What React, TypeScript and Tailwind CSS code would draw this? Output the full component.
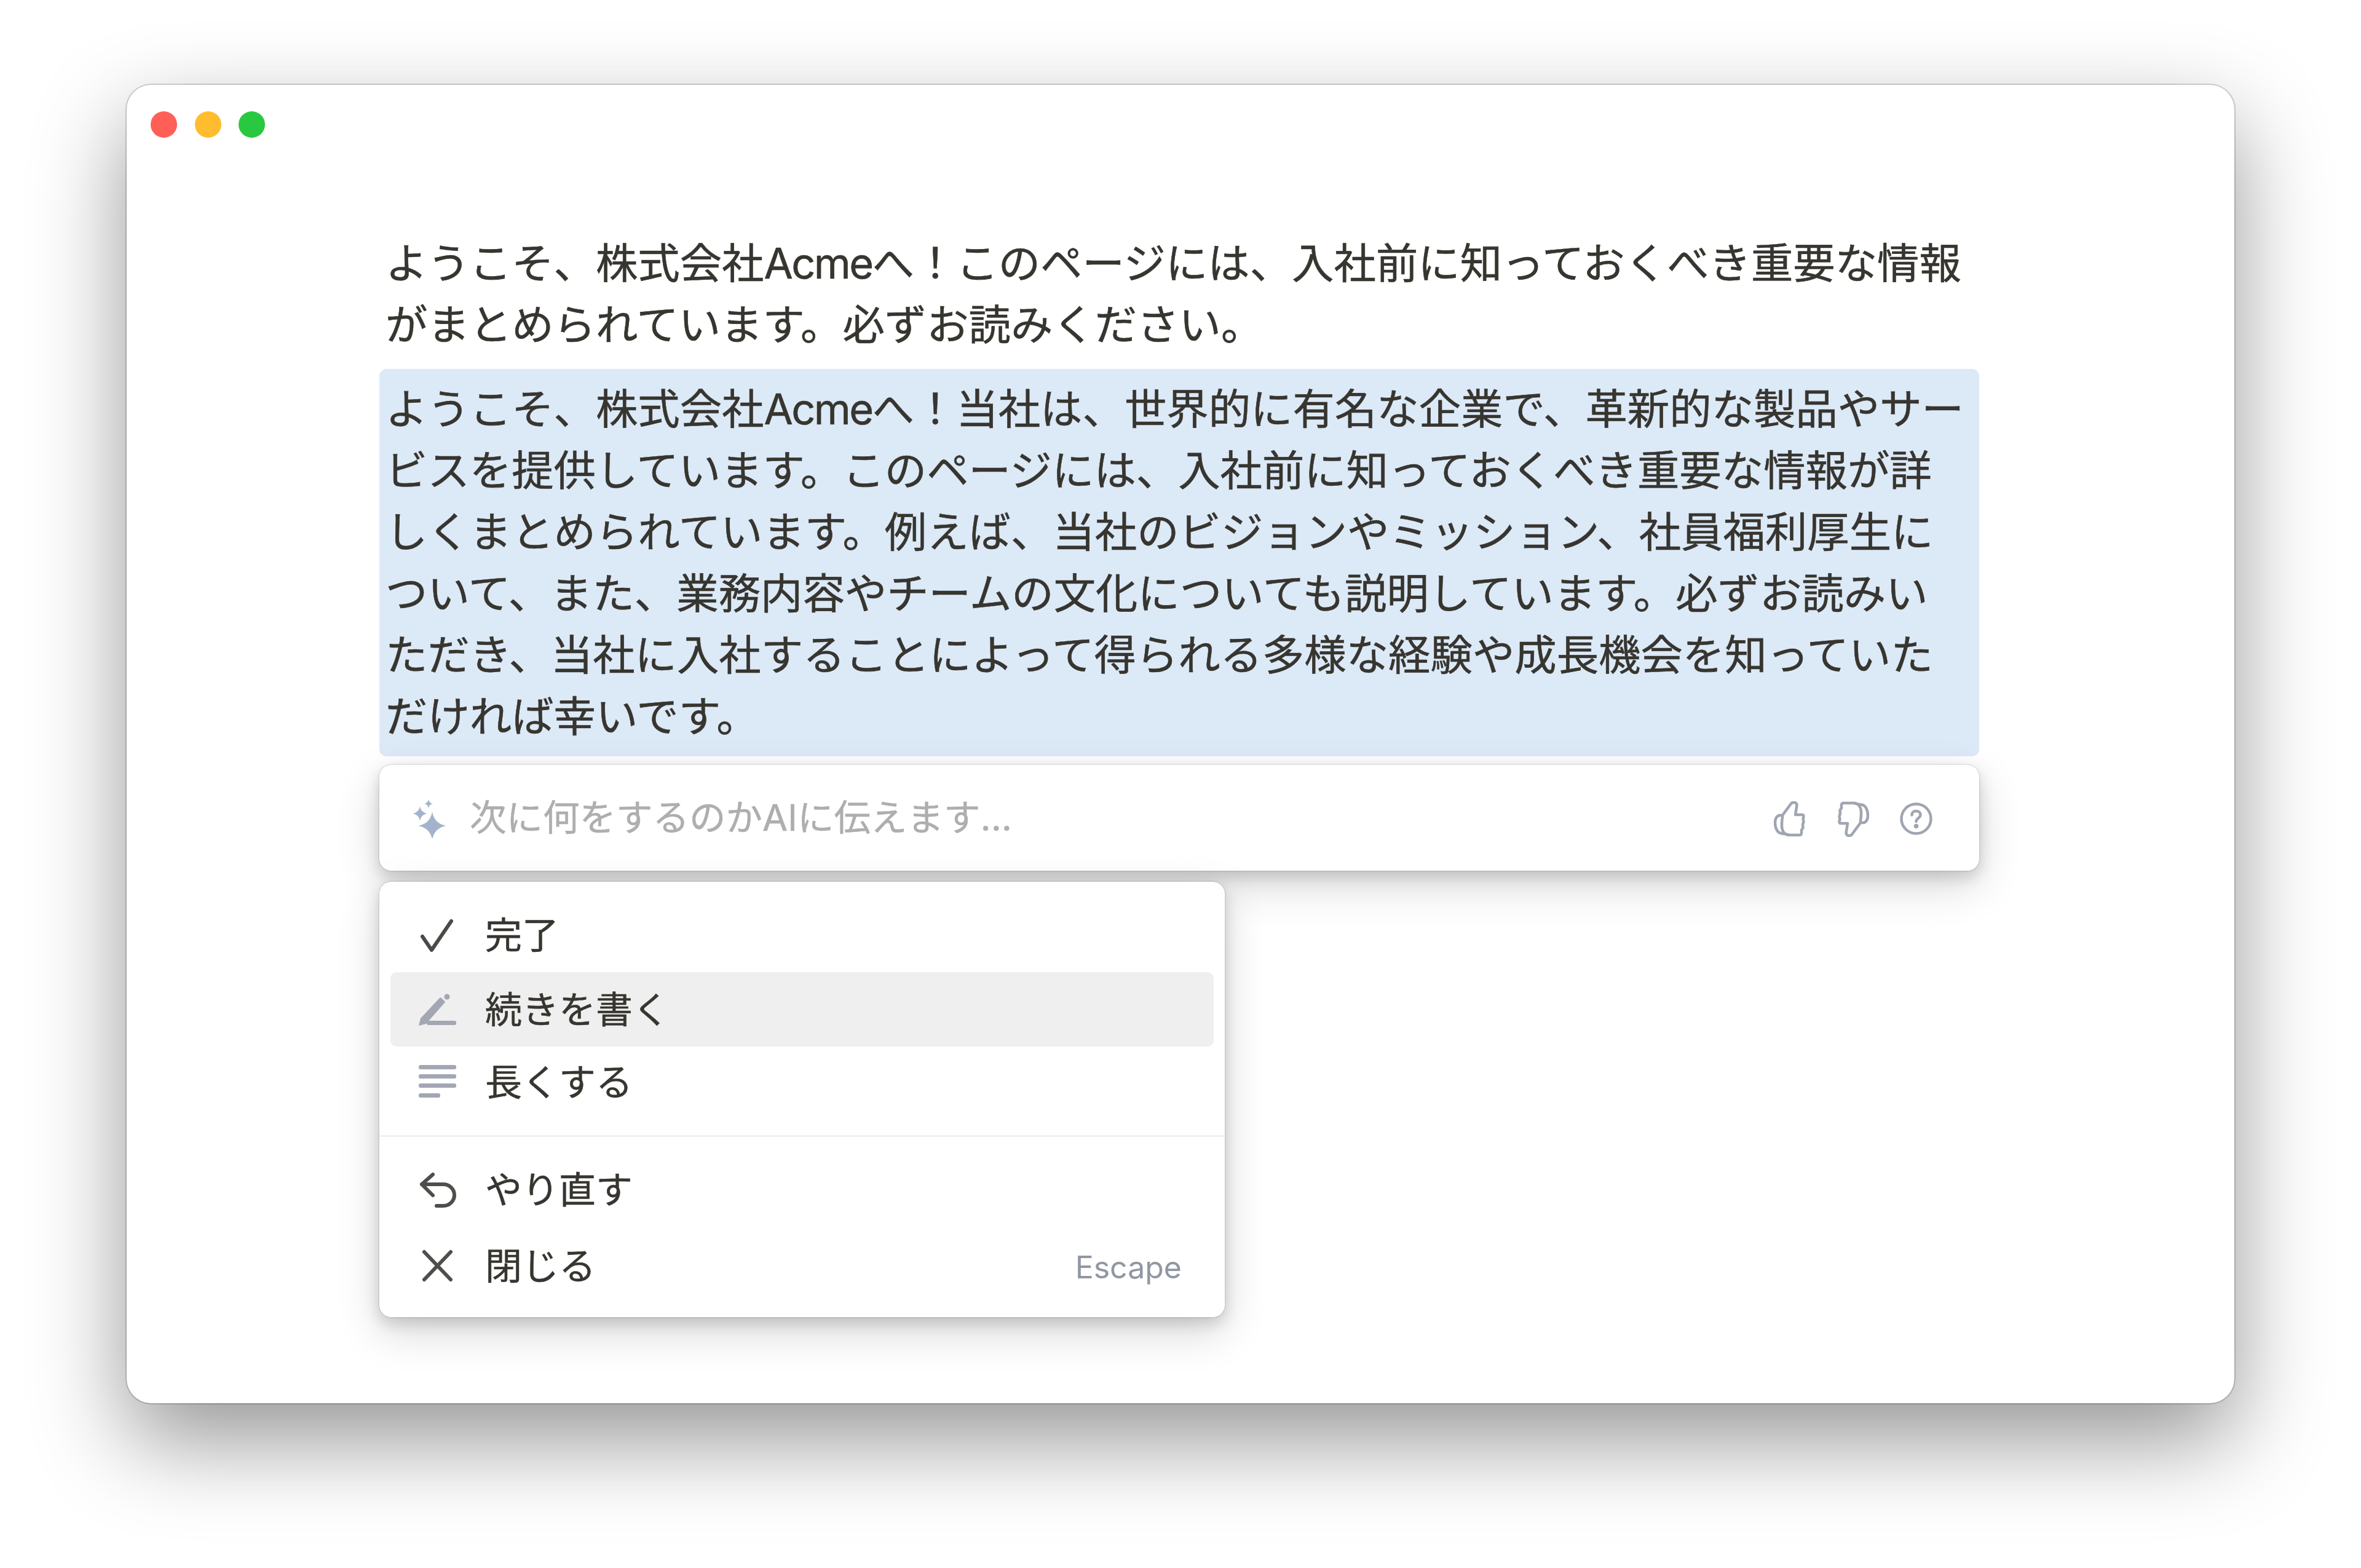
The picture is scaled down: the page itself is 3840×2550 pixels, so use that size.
function Star({ x, y, r }: { x: number; y: number; r: number }) {
  const k = r * 0.16;
  return (
    <path
      d={`M${x} ${y - r}Q${x + k} ${y - k} ${x + r} ${y}Q${x + k} ${y + k} ${x} ${y + r}Q${x - k} ${y + k} ${x - r} ${y}Q${x - k} ${y - k} ${x} ${y - r}Z`}
    />
  );
}

function Sparkles() {
  return (
    <svg width="60" height="66" viewBox="0 0 60 66" className="shrink-0 fill-[#a3b3cc]">
      <Star x={33} y={46} r={22.5} />
      <Star x={13} y={26} r={11.5} />
      <Star x={27} y={10} r={7} />
    </svg>
  );
}

function ThumbUp({ className }: { className?: string }) {
  return (
    <svg width="51" height="58" viewBox="0 0 51 58" fill="none" className={className}>
      <path
        d="M14 23 28 4c3-3.500 9-2.500 9.500 2.500L35 22h11c2 0 2.500 1.500 2.500 3l-1 4 1 4-1.500 5 .5 5-2.500 4v5c0 2-1.500 3-3 3H25c-7 0-12-6-12-15 0-6 .5-11 1-13.500Z"
        stroke="#a0a5b1"
        strokeWidth="4.500"
        strokeLinejoin="round"
      />
      <path
        d="M14 23h-4c-5 0-8 5.500-8 12 0 9 4 17 11 17.500 4 .5 8 1 12 2.500"
        stroke="#a0a5b1"
        strokeWidth="4.500"
        strokeLinejoin="round"
      />
    </svg>
  );
}

function Help() {
  return (
    <svg width="53" height="53" viewBox="0 0 53 53" fill="none" stroke="#a0a5b1" strokeWidth="4.500" strokeLinecap="round">
      <circle cx="26.500" cy="26.500" r="24" />
      <path d="M19.500 20.500c0-4 3-6.500 7-6.500s7 2.500 7 6c0 5.500-7 5.500-7 11" />
      <circle cx="26.500" cy="38.500" r="1.500" fill="#a0a5b1" />
    </svg>
  );
}

function CheckIcon() {
  return (
    <svg width="64" height="60" viewBox="0 0 64 60" fill="none" stroke="#4b4a46" strokeWidth="6" strokeLinecap="round" strokeLinejoin="round">
      <path d="M8 32 23 54 55 7" />
    </svg>
  );
}

function PencilIcon() {
  return (
    <svg width="64" height="60" viewBox="0 0 64 60" fill="#a3a6b3">
      <path d="M2 56 5 44 36 11c1-1 2-1 3 0l5 5c1 1 1 2 0 3L14 53Z" />
      <circle cx="48" cy="9" r="4.500" />
      <rect x="15" y="48" width="48" height="7" rx="3" />
    </svg>
  );
}

function LinesIcon() {
  return (
    <svg width="64" height="60" viewBox="0 0 64 60" fill="#a3a6b3">
      <rect x="2" y="2" width="61" height="7" rx="3" />
      <rect x="2" y="17" width="61" height="7" rx="3" />
      <rect x="2" y="32" width="61" height="7" rx="3" />
      <rect x="2" y="48" width="35" height="7" rx="3" />
    </svg>
  );
}

function UndoIcon() {
  return (
    <svg width="64" height="60" viewBox="0 0 64 60" fill="none" stroke="#4f4e4a" strokeWidth="6" strokeLinecap="round" strokeLinejoin="round">
      <path d="M25 5 7 21 25 39" />
      <path d="M7 21H42A18 17.500 0 0 1 42 56H31" />
    </svg>
  );
}

function CloseIcon() {
  return (
    <svg width="64" height="60" viewBox="0 0 64 60" fill="none" stroke="#4f4e4a" strokeWidth="6" strokeLinecap="round">
      <path d="M11 7 54 52M54 7 11 52" />
    </svg>
  );
}

function MenuRow({
  icon,
  label,
  active,
  hint,
  className,
}: {
  icon: React.ReactNode;
  label: string;
  active?: boolean;
  hint?: string;
  className?: string;
}) {
  return (
    <div className={`flex h-[121px] items-center rounded-[10px] pl-[44px] pr-[52px] ${active ? "bg-[#efefef]" : ""} ${className ?? ""}`}>
      <span className="mr-[46px] flex shrink-0">{icon}</span>
      <span className="text-[60px] leading-none text-[#37352f] [-webkit-text-stroke:0.5px_#37352f]">{label}</span>
      {hint && <span className="ml-auto translate-y-[2px] text-[50px] leading-none text-[#9097a3]">{hint}</span>}
    </div>
  );
}

export default function App() {
  return (
    <div className="h-[2550px] w-[3840px] overflow-hidden bg-white pl-[206px] pt-[138px] font-['Inter','Noto_Sans_CJK_JP',sans-serif]">
      <div className="flex h-[2144px] w-[3428px] flex-col rounded-[40px] bg-white shadow-[0_0_0_2px_rgba(0,0,0,0.16),0_60px_150px_rgba(0,0,0,0.42)]">
        <div className="flex gap-[28.500px] pl-[39px] pt-[43px]">
          <span className="h-[43px] w-[43px] rounded-full bg-[#ff5f57]" />
          <span className="h-[43px] w-[43px] rounded-full bg-[#febc2e]" />
          <span className="h-[43px] w-[43px] rounded-full bg-[#28c840]" />
        </div>

        <div className="ml-[411px] mt-[154px] w-[2602px] text-[68.400px] leading-[100px] text-[#37352f] [-webkit-text-stroke:0.6px_#37352f]">
          <div className="pl-[10px] pr-[16px]">
            <p>
              ようこそ、株式会社<span className="tracking-[-2.500px]">Acme</span>へ！このページには、入社前に知っておくべき重要な情報
            </p>
            <p>がまとめられています。必ずお読みください。</p>
          </div>
          <div className="mt-[22px] rounded-[12px] bg-[#dce9f7] py-[15px] pl-[10px] pr-[16px]">
            <p>
              ようこそ、株式会社<span className="tracking-[-2.500px]">Acme</span>へ！当社は、世界的に有名な企業で、革新的な製品やサー
            </p>
            <p>
              ビスを提供しています。このページには、入社前に知っておくべき重要な情報が詳しくまとめられています。例えば、当社のビジョンやミッション、社員福利厚生について、また、業務内容やチームの文化についても説明しています。必ずお読みいただき、当社に入社することによって得られる多様な経験や成長機会を知っていただければ幸いです。
            </p>
          </div>

          <div className="mt-[14px] flex h-[172px] items-center rounded-[20px] bg-white pl-[53px] pr-[76px] [-webkit-text-stroke:0] shadow-[0_0_0_2px_rgba(15,15,15,0.06),0_10px_24px_rgba(15,15,15,0.16),0_24px_70px_rgba(15,15,15,0.16)]">
            <Sparkles />
            <span className="ml-[34px] text-[59.500px] leading-none text-[#aeaeae] [-webkit-text-stroke:0.5px_#aeaeae]">次に何をするのかAIに伝えます...</span>
            <div className="ml-auto mt-[3px] flex items-center gap-[50px]">
              <ThumbUp className="mr-[3px]" />
              <ThumbUp className="rotate-180" />
              <Help />
            </div>
          </div>

          <div className="mt-[18px] h-[708px] w-[1375px] rounded-[20px] bg-white pt-[26px] [-webkit-text-stroke:0] shadow-[0_0_0_2px_rgba(15,15,15,0.06),0_10px_24px_rgba(15,15,15,0.16),0_24px_70px_rgba(15,15,15,0.16)]">
            <div className="flex flex-col px-[18px]">
              <MenuRow icon={<CheckIcon />} label="完了" />
              <MenuRow icon={<PencilIcon />} label="続きを書く" active />
              <MenuRow icon={<LinesIcon />} label="長くする" className="-mt-[3px]" />
            </div>
            <div className="mb-[25px] mt-[26px] h-[3px] bg-[#f0f0f0]" />
            <div className="flex flex-col gap-[3px] px-[18px]">
              <MenuRow icon={<UndoIcon />} label="やり直す" />
              <MenuRow icon={<CloseIcon />} label="閉じる" hint="Escape" />
            </div>
          </div>
        </div>
      </div>
    </div>
  );
}
